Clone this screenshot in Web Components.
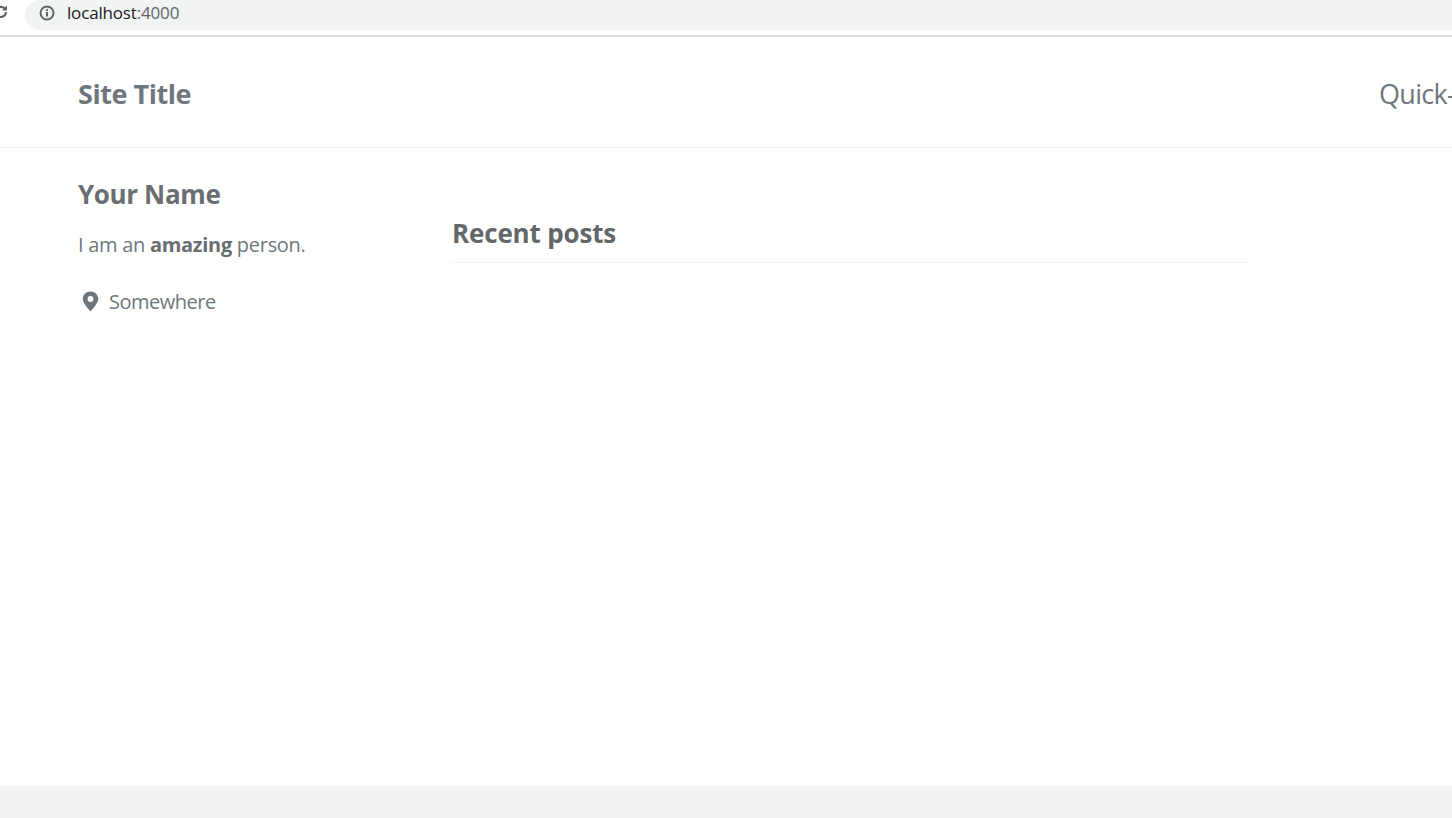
<!DOCTYPE html>
<html>
<head>
<meta charset="utf-8">
<title>Site Title</title>
<style>
  html,body{ margin:0; height:100%; overflow:hidden; background:#fff; }
  body{ font-family:'Open Sans','Noto Sans',sans-serif; }
  .page{ display:flex; flex-direction:column; height:818px; width:1452px; overflow:hidden; }
</style>
</head>
<body>
<div class="page">
  <browser-bar url-host="localhost" url-port=":4000"></browser-bar>
  <site-masthead site-title="Site Title" nav="Quick-Start Guide"></site-masthead>
  <page-main>
    <author-profile slot="side" name="Your Name" location="Somewhere">I am an <b>amazing</b> person.</author-profile>
    <recent-posts slot="content" heading="Recent posts"></recent-posts>
  </page-main>
  <page-footer></page-footer>
</div>

<script>
class BrowserBar extends HTMLElement{
  connectedCallback(){
    this.attachShadow({mode:'open'}).innerHTML = `
      <style>
        :host{ display:block; flex:none; height:37px; box-sizing:border-box; border-bottom:2px solid #dadce0; background:#fff; overflow:hidden; }
        .row{ display:flex; height:30px; }
        .reload{ flex:none; width:25px; height:30px; margin-left:-7px; margin-right:7px; }
        .reload svg{ display:block; margin-top:4px; }
        .omni{ flex:1; margin-right:-30px; display:flex; align-items:center; gap:13px; padding-left:14px; background:#f1f3f4; border-radius:15px 0 0 15px; }
        .omni svg{ flex:none; }
        .url{ font:17px/1 'Open Sans',sans-serif; letter-spacing:-.17px; color:#202124; margin-top:-6px; margin-left:-1px; }
        .url span{ color:#5f6368; }
      </style>
      <div class="row">
        <div class="reload">
          <svg width="16" height="16" viewBox="0 0 16 16"><path d="M13 8a5 5 0 1 1-1.6-3.7" fill="none" stroke="#5f6368" stroke-width="2.2"/><path d="M14 1.4v5.2H8.8z" fill="#5f6368"/></svg>
        </div>
        <div class="omni">
          <svg width="16" height="16" viewBox="0 0 16 16" style="margin-top:-5px"><circle cx="8" cy="8" r="6.5" fill="none" stroke="#5f6368" stroke-width="1.9"/><rect x="7" y="7" width="2" height="4.6" fill="#5f6368"/><rect x="7" y="4.2" width="2" height="1.8" fill="#5f6368"/></svg>
          <div class="url">${this.getAttribute('url-host')}<span>${this.getAttribute('url-port')}</span></div>
        </div>
      </div>`
  }
}

class SiteMasthead extends HTMLElement{
  connectedCallback(){
    this.attachShadow({mode:'open'}).innerHTML = `
      <style>
        :host{ display:block; flex:none; height:111px; box-sizing:border-box; border-bottom:1px solid #f2f3f3; background:#fff; overflow:hidden; }
        .inner{ display:grid; grid-template-columns:1301px max-content; align-items:center; height:112px; padding-left:78px; }
        .title{ font-size:27px; font-weight:700; color:#6f777d; letter-spacing:-.45px; }
        .nav{ font-size:27px; font-weight:400; color:#6f777d; letter-spacing:-.7px; white-space:nowrap; }
      </style>
      <div class="inner">
        <div class="title">${this.getAttribute('site-title')}</div>
        <div class="nav">${this.getAttribute('nav')}</div>
      </div>`
  }
}

class PageMain extends HTMLElement{
  connectedCallback(){
    this.attachShadow({mode:'open'}).innerHTML = `
      <style>
        :host{ display:block; flex:1; min-height:0; background:#fff; }
        .grid{ display:grid; grid-template-columns:374px 796px; padding-left:78px; }
      </style>
      <div class="grid"><slot name="side"></slot><slot name="content"></slot></div>`
  }
}

class AuthorProfile extends HTMLElement{
  connectedCallback(){
    this.attachShadow({mode:'open'}).innerHTML = `
      <style>
        :host{ display:block; color:#6f777d; padding-top:28px; }
        h3{ margin:0; font-size:26px; line-height:36px; font-weight:700; color:#6a6e72; letter-spacing:-.37px; }
        p{ margin:19px 0 0; font-size:20px; line-height:28px; letter-spacing:-.29px; font-weight:400; }
        ::slotted(b){ color:#6a6e72; }
        .loc{ display:flex; align-items:center; gap:10px; margin-top:29px; padding-left:4px; font-size:20px; line-height:28px; letter-spacing:-.5px; }
      </style>
      <h3>${this.getAttribute('name')}</h3>
      <p><slot></slot></p>
      <div class="loc">
        <svg width="17" height="21" viewBox="0 0 17 21" style="margin-top:-1px"><path fill-rule="evenodd" fill="#6f777d" d="M8.5 0.5C4 0.5 0.8 3.7 0.8 7.8 0.8 12.2 5.8 17.2 8.5 20.6 11.2 17.2 16.2 12.2 16.2 7.8 16.2 3.7 13 0.5 8.5 0.5ZM8.5 5.1A2.9 2.9 0 1 1 8.5 10.9 2.9 2.9 0 1 1 8.5 5.1Z"/></svg>
        <span>${this.getAttribute('location')}</span>
      </div>`
  }
}

class RecentPosts extends HTMLElement{
  connectedCallback(){
    this.attachShadow({mode:'open'}).innerHTML = `
      <style>
        :host{ display:block; padding-top:67px; }
        h3{ margin:0; padding:0 0 11px 0; font-size:26px; line-height:36px; font-weight:700; color:#63676a; letter-spacing:-.17px; border-bottom:1px solid #f2f3f3; }
      </style>
      <h3>${this.getAttribute('heading')}</h3>`
  }
}

class PageFooter extends HTMLElement{
  connectedCallback(){
    this.attachShadow({mode:'open'}).innerHTML = `
      <style>:host{ display:block; flex:none; height:32px; background:#f2f3f3; }</style>`
  }
}

customElements.define('browser-bar', BrowserBar)
customElements.define('site-masthead', SiteMasthead)
customElements.define('page-main', PageMain)
customElements.define('author-profile', AuthorProfile)
customElements.define('recent-posts', RecentPosts)
customElements.define('page-footer', PageFooter)
</script>
</body>
</html>
